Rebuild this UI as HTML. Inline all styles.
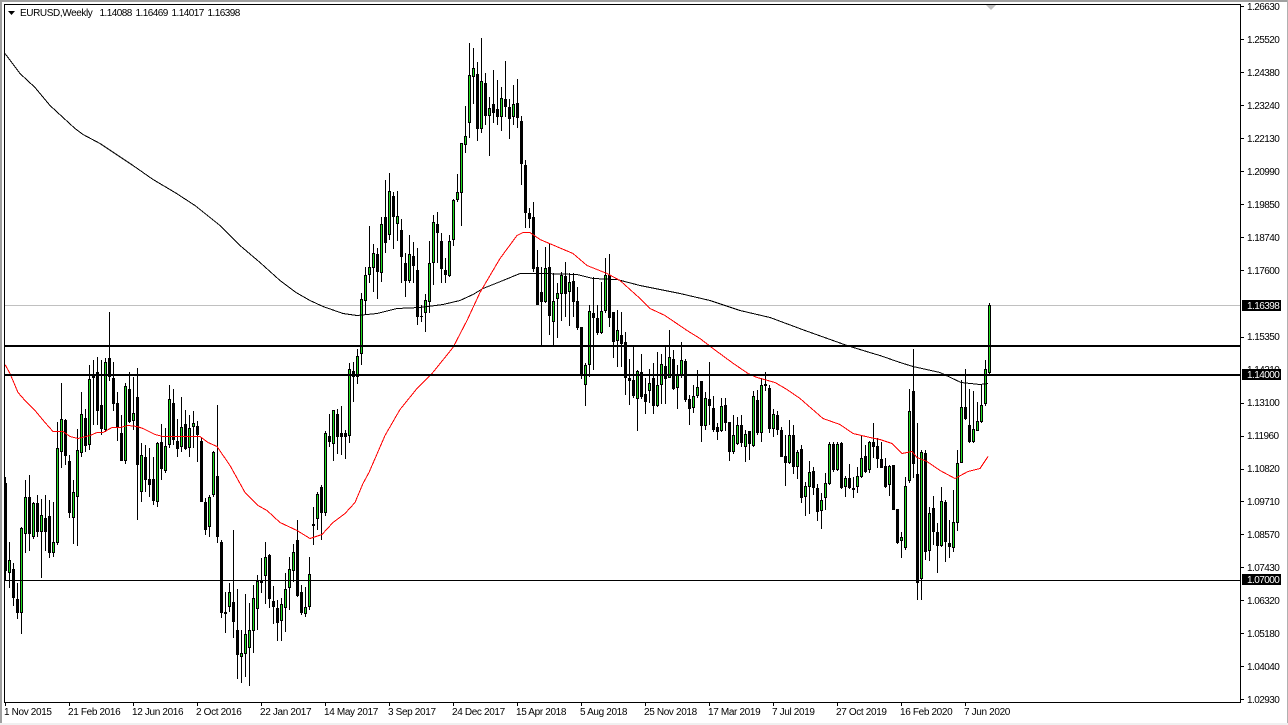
<!DOCTYPE html>
<html><head><meta charset="utf-8"><style>
html,body{margin:0;padding:0;background:#fff;width:1288px;height:725px;overflow:hidden}
svg{display:block}
text{font-family:"Liberation Sans",sans-serif;font-size:10px;fill:#000}
.p{letter-spacing:-.55px}.d{letter-spacing:-.35px}.w{fill:#fff;letter-spacing:-.55px}
</style></head><body>
<svg width="1288" height="725" viewBox="0 0 1288 725" xmlns="http://www.w3.org/2000/svg">
<rect width="1288" height="725" fill="#fff"/>
<rect x="0" y="0" width="1288" height="2" fill="#a0a0a0"/>
<rect x="0" y="0" width="2" height="725" fill="#a0a0a0"/>
<rect x="1287" y="0" width="1" height="725" fill="#b0b0b0"/>
<rect x="0" y="723" width="1288" height="2" fill="#f0f0f0"/>
<g shape-rendering="crispEdges">
<path d="M5 305.5H1240" stroke="#c0c0c0" fill="none"/>
<path fill="none" stroke="#000" stroke-width="1" d="M5.5 477V580M9.5 542V588M13.5 563V606M17.5 583V619M21.5 527V634M25.5 480V553M29.5 475V551M33.5 502V539M37.5 495V537M41.5 499V578M45.5 495V551M49.5 500V558M53.5 502V557M57.5 422V545M61.5 383V468M65.5 419V465M69.5 455V518M73.5 480V544M77.5 429V546M81.5 392V457M85.5 409V452M89.5 365V450M93.5 360V425M97.5 357V425M101.5 360V435M105.5 358V432M109.5 312V381M113.5 362V411M117.5 392V441M121.5 415V461M125.5 383V464M129.5 372V423M133.5 377V430M137.5 368V520M141.5 443V502M145.5 445V492M149.5 448V497M153.5 457V505M157.5 442V507M161.5 424V480M165.5 428V473M169.5 385V448M173.5 389V445M177.5 419V457M181.5 397V452M185.5 410V450M189.5 415V457M193.5 411V448M197.5 421V462M201.5 437V502M205.5 498V535M209.5 495V537M213.5 451V497M217.5 405V543M221.5 540V618M225.5 592V633M229.5 583V612M233.5 530V638M237.5 589V679M241.5 630V683M245.5 594V677M249.5 603V686M253.5 585V653M257.5 575V630M261.5 558V593M265.5 542V604M269.5 554V608M273.5 586V624M277.5 600V641M281.5 598V641M285.5 573V632M289.5 557V610M293.5 544V582M297.5 520V597M301.5 585V615M305.5 587V617M309.5 557V610M313.5 507V545M317.5 492V530M321.5 485V540M325.5 431V516M329.5 414V447M333.5 410V461M337.5 409V454M341.5 406V455M345.5 430V459M349.5 363V443M353.5 362V402M357.5 349V384M361.5 293V365M365.5 267V314M369.5 226V283M373.5 244V292M377.5 248V299M381.5 217V282M385.5 180V253M389.5 173V240M393.5 192V249M397.5 191V241M401.5 219V283M405.5 253V297M409.5 235V283M413.5 242V283M417.5 248V325M421.5 305V322M425.5 294V332M429.5 241V313M433.5 215V285M437.5 212V263M441.5 233V283M445.5 258V283M449.5 235V277M453.5 199V246M457.5 174V202M461.5 143V226M465.5 106V153M469.5 43V138M473.5 48V104M477.5 62V141M481.5 38V133M485.5 73V125M489.5 97V156M493.5 70V123M497.5 80V125M501.5 87V131M505.5 61V117M509.5 99V139M513.5 85V125M517.5 79V128M521.5 116V185M525.5 160V228M529.5 208V228M533.5 202V272M537.5 250V305M541.5 267V345M545.5 247V303M549.5 243V335M553.5 273V345M557.5 283V338M561.5 272V321M565.5 262V317M569.5 273V326M573.5 273V317M577.5 287V330M581.5 327V379M585.5 363V406M589.5 305V377M593.5 277V370M597.5 305V335M601.5 282V334M605.5 258V313M609.5 254V327M613.5 312V358M617.5 310V367M621.5 312V367M625.5 332V395M629.5 359V405M633.5 347V398M637.5 370V431M641.5 354V399M645.5 378V414M649.5 369V403M653.5 363V414M657.5 352V407M661.5 354V404M665.5 347V404M669.5 330V378M673.5 350V390M677.5 365V409M681.5 342V378M685.5 359V402M689.5 395V425M693.5 385V413M697.5 370V398M701.5 381V442M705.5 392V430M709.5 362V425M713.5 396V432M717.5 423V440M721.5 398V432M725.5 398V431M729.5 422V461M733.5 415V454M737.5 417V445M741.5 415V447M745.5 430V462M749.5 431V460M753.5 391V447M757.5 390V435M761.5 378V442M765.5 372V391M769.5 385V433M773.5 409V437M777.5 411V435M781.5 427V457M785.5 435V486M789.5 420V464M793.5 425V474M797.5 450V479M801.5 445V503M805.5 482V516M809.5 461V514M813.5 467V495M817.5 484V521M821.5 493V529M825.5 473V510M829.5 442V485M833.5 442V472M837.5 442V471M841.5 442V489M845.5 476V497M849.5 464V489M853.5 477V498M857.5 467V493M861.5 435V478M865.5 445V473M869.5 441V473M873.5 423V458M877.5 438V468M881.5 442V468M885.5 458V488M889.5 465V496M893.5 465V510M897.5 509V544M901.5 532V558M905.5 477V550M909.5 389V483M913.5 349V478M917.5 423V600M921.5 450V600M925.5 450V560M929.5 507V561M933.5 496V545M937.5 523V573M941.5 487V547M945.5 500V562M949.5 520V558M953.5 490V552M957.5 450V531M961.5 380V463M965.5 369V420M969.5 389V443M973.5 391V443M977.5 402V431M981.5 384V423M985.5 360V406M989.5 303V375"/>
<path fill="none" stroke="#000" stroke-width="3" d="M5.5 483V571M9.5 560V573M13.5 569V598M17.5 599V613M21.5 528V613M25.5 497V534M29.5 497V534M33.5 503V537M37.5 503V532M41.5 515V532M45.5 518V532M49.5 516V553M53.5 542V553M57.5 448V543M61.5 419V452M65.5 420V456M69.5 461V513M73.5 492V518M77.5 450V497M81.5 414V453M85.5 418V446M89.5 379V445M93.5 376V378M97.5 372V411M101.5 405V429M105.5 362V430M109.5 358V377M113.5 378V404M117.5 403V428M121.5 433V461M125.5 386V461M129.5 389V422M133.5 413V421M137.5 397V465M141.5 455V492M145.5 457V480M149.5 479V485M153.5 479V501M157.5 443V502M161.5 442V469M165.5 446V471M169.5 399V445M173.5 403V440M177.5 441V449M181.5 427V447M185.5 424V449M189.5 428V448M193.5 423V427M197.5 426V435M201.5 441V502M205.5 502V530M209.5 497V527M213.5 452V495M217.5 476V537M221.5 542V613M225.5 612V614M229.5 592V607M233.5 602V622M237.5 630V655M241.5 653V657M245.5 634V654M249.5 630V648M253.5 598V631M257.5 581V609M261.5 581V583M265.5 557V576M269.5 555V599M273.5 601V607M277.5 608V623M281.5 604V621M285.5 589V608M289.5 569V588M293.5 552V571M297.5 540V596M301.5 592V613M305.5 607V614M309.5 574V607M313.5 524V526M317.5 494V519M321.5 487V513M325.5 433V513M329.5 436V442M333.5 410V444M337.5 414V437M341.5 433V437M345.5 433V437M349.5 369V436M353.5 371V377M357.5 356V377M361.5 299V354M365.5 275V301M369.5 267V275M373.5 253V268M377.5 254V272M381.5 224V273M385.5 217V243M389.5 191V235M393.5 196V217M397.5 216V224M401.5 230V257M405.5 263V281M409.5 254V281M413.5 256V266M417.5 270V317M421.5 316V317M425.5 300V313M429.5 263V302M433.5 222V263M437.5 224V233M441.5 241V269M445.5 270V275M449.5 241V276M453.5 200V240M457.5 192V200M461.5 143V193M465.5 136V145M469.5 75V123M473.5 68V77M477.5 74V129M481.5 81V129M485.5 83V116M489.5 108V116M493.5 104V113M497.5 109V117M501.5 98V117M505.5 99V107M509.5 107V119M513.5 104V117M517.5 103V118M521.5 121V164M525.5 165V213M529.5 213V219M533.5 217V269M537.5 267V305M541.5 292V302M545.5 268V302M549.5 267V316M553.5 301V322M557.5 293V299M561.5 275V294M565.5 276V294M569.5 282V292M573.5 281V302M577.5 301V328M581.5 327V375M585.5 365V385M589.5 311V365M593.5 313V318M597.5 318V333M601.5 311V333M605.5 275V311M609.5 275V318M613.5 312V342M617.5 330V341M621.5 335V344M625.5 342V378M629.5 378V381M633.5 380V396M637.5 371V399M641.5 372V397M645.5 394V402M649.5 383V391M653.5 378V406M657.5 385V406M661.5 364V385M665.5 366V379M669.5 357V378M673.5 359V389M677.5 375V388M681.5 360V376M685.5 361V400M689.5 399V409M693.5 396V408M697.5 387V396M701.5 381V426M705.5 398V426M709.5 399V406M713.5 408V430M717.5 427V432M721.5 406V431M725.5 405V423M729.5 422V452M733.5 435V452M737.5 425V444M741.5 425V443M745.5 434V447M749.5 431V444M753.5 396V446M757.5 400V433M761.5 385V433M765.5 384V386M769.5 388V429M773.5 414V429M777.5 415V430M781.5 430V457M785.5 456V463M789.5 435V463M793.5 435V467M797.5 452V467M801.5 449V498M805.5 486V497M809.5 472V487M813.5 471V488M817.5 488V512M821.5 500V511M825.5 483V498M829.5 444V484M833.5 444V470M837.5 444V470M841.5 443V488M845.5 478V487M849.5 478V488M853.5 488V490M857.5 476V487M861.5 458V477M865.5 456V472M869.5 442V470M873.5 442V447M877.5 446V459M881.5 459V468M885.5 466V487M889.5 466V485M893.5 465V510M897.5 509V543M901.5 537V541M905.5 486V548M909.5 411V481M913.5 391V464M917.5 474V583M921.5 452V579M925.5 453V552M929.5 513V551M933.5 508V532M937.5 532V546M941.5 501V546M945.5 502V542M949.5 543V547M953.5 522V548M957.5 463V523M961.5 407V463M965.5 407V419M969.5 425V442M973.5 429V442M977.5 421V431M981.5 405V422M985.5 369V404M989.5 305V373"/>
<path fill="none" stroke="#1fdc1f" stroke-width="1" d="M9.5 561V572M21.5 529V612M25.5 498V533M33.5 504V536M41.5 516V531M53.5 543V552M57.5 449V542M61.5 420V451M73.5 493V517M77.5 451V496M81.5 415V452M89.5 380V444M105.5 363V429M125.5 387V460M133.5 414V420M141.5 456V491M157.5 444V501M165.5 447V470M169.5 400V444M181.5 428V446M189.5 429V447M193.5 424V426M209.5 498V526M213.5 453V494M229.5 593V606M241.5 654V656M245.5 635V653M249.5 631V647M253.5 599V630M257.5 582V608M265.5 558V575M281.5 605V620M285.5 590V607M289.5 570V587M293.5 553V570M305.5 608V613M309.5 575V606M317.5 495V518M325.5 434V512M333.5 411V443M349.5 370V435M357.5 357V376M361.5 300V353M365.5 276V300M369.5 268V274M373.5 254V267M381.5 225V272M389.5 192V234M397.5 217V223M409.5 255V280M425.5 301V312M429.5 264V301M433.5 223V262M449.5 242V275M453.5 201V239M457.5 193V199M461.5 144V192M465.5 137V144M469.5 76V122M473.5 69V76M481.5 82V128M489.5 109V115M501.5 99V116M513.5 105V116M545.5 269V301M553.5 302V321M557.5 294V298M561.5 276V293M569.5 283V291M585.5 366V384M589.5 312V364M601.5 312V332M605.5 276V310M617.5 331V340M637.5 372V398M649.5 384V390M657.5 386V405M661.5 365V384M669.5 358V377M677.5 376V387M681.5 361V375M693.5 397V407M697.5 388V395M705.5 399V425M721.5 407V430M733.5 436V451M737.5 426V443M745.5 435V446M753.5 397V445M761.5 386V432M773.5 415V428M789.5 436V462M797.5 453V466M805.5 487V496M809.5 473V486M821.5 501V510M825.5 484V497M829.5 445V483M837.5 445V469M845.5 479V486M857.5 477V486M861.5 459V476M869.5 443V469M889.5 467V484M901.5 538V540M905.5 487V547M909.5 412V480M921.5 453V578M929.5 514V550M941.5 502V545M953.5 523V547M957.5 464V522M961.5 408V462M973.5 430V441M977.5 422V430M981.5 406V421M985.5 370V403M989.5 306V372"/>
<path fill="none" stroke="#000" d="M5 53.5L20 73.5 35 87.5 50 105.5 63 117.5 75 128.5 83 134.5 100 143.5 115 153.5 133 165.5 153 179.5 175 192.5 195 205.5 220 225.5 240 245.5 260 262.5 280 280.5 296 292.5 310 300.5 323 306.5 343 313.5 357 315.5 377 313.5 397 308.5 420 307.5 443 304.5 460 300.5 473 294.5 483 288.5 503 280.5 520 273.5 543 273.5 577 274.5 593 278.5 617 279.5 640 285.5 680 293.5 710 300.5 740 310.5 770 317.5 805 330.5 847 345.5 873 353.5 880 355.5 900 362.5 913 366.5 940 372.5 961 382.5 980 384.5 988 383.5"/>
<path fill="none" stroke="#f00" d="M5 364.5L10 373.5 18 392.5 25 400.5 35 410.5 45 422.5 53 431.5 63 431.5 70 436.5 78 438.5 90 435.5 97 432.5 103 432.5 112 427.5 120 427.5 128 425.5 137 426.5 143 428.5 155 434.5 163 436.5 200 436.5 208 442.5 217 446.5 230 465.5 245 492.5 258 505.5 267 510.5 280 522.5 297 530.5 310 538.5 322 534.5 333 522.5 345 513.5 355 502.5 363 483.5 369 472.5 385 435.5 400 409.5 417 388.5 432 373.5 453 347.5 467 320.5 480 292.5 500 258.5 517 235.5 523 232.5 530 232.5 540 239.5 573 253.5 587 265.5 607 273.5 620 280.5 640 298.5 650 308.5 665 315.5 687 330.5 700 338.5 713 348.5 732 362.5 748 373.5 757 377.5 775 382.5 787 389.5 800 398.5 823 418.5 840 424.5 853 433.5 870 437.5 880 439.5 892 443.5 902 453.5 912 451.5 917 457.5 927 461.5 940 470.5 955 478.5 968 471.5 980 468.5 988 456.5"/>
<rect x="5" y="345" width="1235" height="2" fill="#000"/>
<rect x="5" y="374" width="1235" height="2" fill="#000"/>
<rect x="5" y="580" width="1235" height="1" fill="#000"/>
<path fill="none" stroke="#000" d="M4.5 4V703M4 4.5H1241M1240.5 4V703M4 702.5H1241"/>
<path fill="none" stroke="#000" d="M1241 6.5h3M1241 39.5h3M1241 72.5h3M1241 105.5h3M1241 138.5h3M1241 171.5h3M1241 204.5h3M1241 237.5h3M1241 270.5h3M1241 337.5h3M1241 403.5h3M1241 436.5h3M1241 469.5h3M1241 501.5h3M1241 534.5h3M1241 567.5h3M1241 600.5h3M1241 633.5h3M1241 666.5h3M1241 699.5h3"/>
<path fill="none" stroke="#000" d="M5.5 703v3M69.5 703v3M133.5 703v3M197.5 703v3M261.5 703v3M325.5 703v3M389.5 703v3M453.5 703v3M517.5 703v3M581.5 703v3M645.5 703v3M709.5 703v3M773.5 703v3M837.5 703v3M901.5 703v3M965.5 703v3"/>
</g>
<polygon points="986,5 996,5 991,10" fill="#c0c0c0"/>
<polygon points="8,11 15,11 11.5,15" fill="#000"/>
<text x="20" y="16" style="letter-spacing:-.4px">EURUSD,Weekly</text>
<text x="99.5" y="16" class="p">1.14088</text>
<text x="135.5" y="16" class="p">1.16469</text>
<text x="171.5" y="16" class="p">1.14017</text>
<text x="207.5" y="16" class="p">1.16398</text>
<g>
<text x="1247" y="10" class="p">1.26630</text>
<text x="1247" y="43" class="p">1.25520</text>
<text x="1247" y="76" class="p">1.24380</text>
<text x="1247" y="109" class="p">1.23240</text>
<text x="1247" y="142" class="p">1.22130</text>
<text x="1247" y="175" class="p">1.20990</text>
<text x="1247" y="208" class="p">1.19850</text>
<text x="1247" y="241" class="p">1.18740</text>
<text x="1247" y="274" class="p">1.17600</text>
<text x="1247" y="340" class="p">1.15350</text>
<text x="1247" y="373" class="p">1.14210</text>
<text x="1247" y="406" class="p">1.13100</text>
<text x="1247" y="439" class="p">1.11960</text>
<text x="1247" y="472" class="p">1.10820</text>
<text x="1247" y="505" class="p">1.09710</text>
<text x="1247" y="538" class="p">1.08570</text>
<text x="1247" y="571" class="p">1.07430</text>
<text x="1247" y="604" class="p">1.06320</text>
<text x="1247" y="637" class="p">1.05180</text>
<text x="1247" y="670" class="p">1.04040</text>
<text x="1247" y="703" class="p">1.02930</text>
</g>
<g shape-rendering="crispEdges">
<rect x="1242" y="300" width="39" height="11" fill="#000"/>
<rect x="1242" y="369" width="39" height="11" fill="#000"/>
<rect x="1242" y="574" width="39" height="11" fill="#000"/>
</g>
<text x="1247" y="309" class="w">1.16398</text>
<text x="1247" y="378" class="w">1.14000</text>
<text x="1247" y="583" class="w">1.07000</text>
<g>
<text x="4" y="715" class="d">1 Nov 2015</text>
<text x="68" y="715" class="d">21 Feb 2016</text>
<text x="132" y="715" class="d">12 Jun 2016</text>
<text x="196" y="715" class="d">2 Oct 2016</text>
<text x="260" y="715" class="d">22 Jan 2017</text>
<text x="324" y="715" class="d">14 May 2017</text>
<text x="388" y="715" class="d">3 Sep 2017</text>
<text x="452" y="715" class="d">24 Dec 2017</text>
<text x="516" y="715" class="d">15 Apr 2018</text>
<text x="580" y="715" class="d">5 Aug 2018</text>
<text x="644" y="715" class="d">25 Nov 2018</text>
<text x="708" y="715" class="d">17 Mar 2019</text>
<text x="772" y="715" class="d">7 Jul 2019</text>
<text x="836" y="715" class="d">27 Oct 2019</text>
<text x="900" y="715" class="d">16 Feb 2020</text>
<text x="964" y="715" class="d">7 Jun 2020</text>
</g>
</svg>
</body></html>
